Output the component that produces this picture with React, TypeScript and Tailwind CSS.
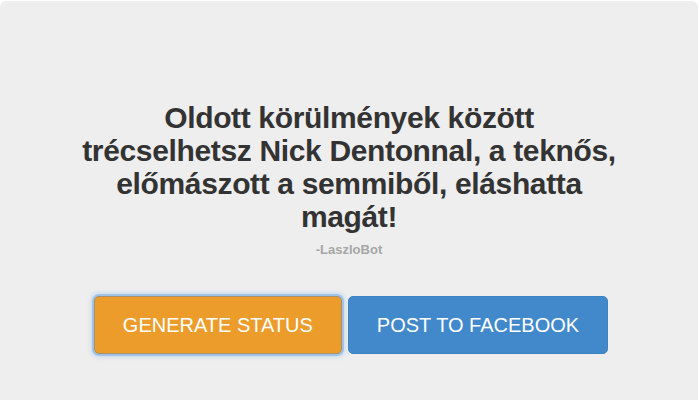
import React from 'react'

export default function App() {
  return (
    <div className="min-h-[400px] bg-white pt-px" style={{ fontFamily: '"Liberation Sans", Arial, sans-serif' }}>
      {/* jumbotron */}
      <div className="h-[399px] rounded-t-[6px] bg-[#eeeeee] flex flex-col items-center pt-[100px]">
        <h2 className="w-[538px] text-center text-[30px] leading-[33px] font-bold tracking-[-0.35px] text-[#333333]">
          Oldott körülmények között trécselhetsz Nick Dentonnal, a teknős, előmászott a semmiből, eláshatta magát!
        </h2>
        <p className="mt-[8px] text-[13px] leading-[18px] font-bold text-[#a6a6a6]">-LaszloBot</p>

        <div className="mt-[37px] flex gap-[6px] pl-[4px]">
          <button className="h-[58px] px-[28px] rounded-[5px] border border-[#a8916a] bg-[#ec9c2a] text-white text-[20px] shadow-[0_0_0_2px_rgba(120,175,230,0.55),0_0_4px_3px_rgba(120,175,230,0.35)]">
            GENERATE STATUS
          </button>
          <button className="h-[58px] px-[28px] rounded-[5px] border border-[#3d82c2] bg-[#4189cb] text-white text-[20px]">
            POST TO FACEBOOK
          </button>
        </div>
      </div>
    </div>
  )
}
